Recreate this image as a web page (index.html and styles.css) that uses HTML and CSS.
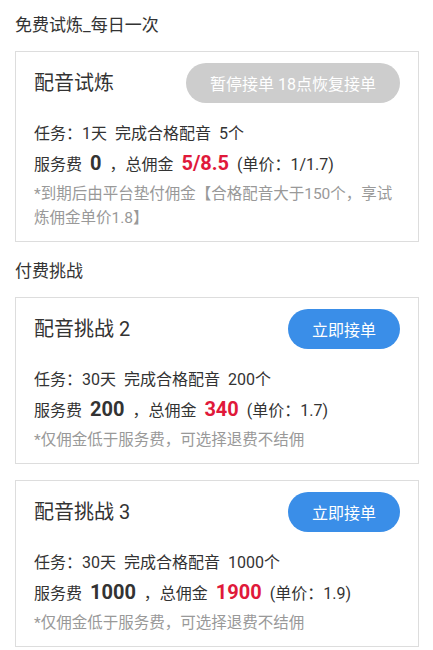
FILE: index.html
```html
<!DOCTYPE html>
<html lang="zh-CN">
<head>
  <meta charset="UTF-8" />
  <meta name="viewport" content="width=device-width, initial-scale=1" />
  <title>配音任务</title>
  <link rel="stylesheet" href="styles.css">
</head>
<body>
  <section class="section">
    <div class="section-title">免费试炼_每日一次</div>
    <div class="card">
      <div class="card-head">
        <div class="card-title">配音试炼</div>
        <button class="btn btn-off">暂停接单 18点恢复接单</button>
      </div>
      <div class="task">任务：1天 完成合格配音 5个</div>
      <div class="fee">服务费 <span class="num">0</span> ，总佣金 <span class="num red">5/8.5</span> (单价：1/1.7)</div>
      <div class="note">*到期后由平台垫付佣金【合格配音大于150个，享试炼佣金单价1.8】</div>
    </div>
  </section>

  <section class="section">
    <div class="section-title">付费挑战</div>
    <div class="card">
      <div class="card-head">
        <div class="card-title">配音挑战 2</div>
        <button class="btn">立即接单</button>
      </div>
      <div class="task">任务：30天 完成合格配音 200个</div>
      <div class="fee">服务费 <span class="num">200</span> ，总佣金 <span class="num red">340</span> (单价：1.7)</div>
      <div class="note">*仅佣金低于服务费，可选择退费不结佣</div>
    </div>

    <div class="card">
      <div class="card-head">
        <div class="card-title">配音挑战 3</div>
        <button class="btn">立即接单</button>
      </div>
      <div class="task">任务：30天 完成合格配音 1000个</div>
      <div class="fee">服务费 <span class="num">1000</span> ，总佣金 <span class="num red">1900</span> (单价：1.9)</div>
      <div class="note">*仅佣金低于服务费，可选择退费不结佣</div>
    </div>
  </section>
</body>
</html>
```

FILE: styles.css
```css
* {
  box-sizing: border-box;
}

body {
  font-family: Roboto, "Noto Sans CJK SC", sans-serif;
  margin: 0;
  padding: 0 14px 0 15px;
  color: #333;
  background: #fff;
}

.section + .section {
  margin-top: 4px;
}

.section-title {
  font-size: 17px;
  line-height: 24px;
  padding: 13px 0 14px;
  color: #333;
}

.card {
  border: 1px solid #ddd;
  padding: 11px 18px 11px;
}

.card + .card {
  margin-top: 16px;
}

.card-head {
  display: flex;
  justify-content: space-between;
  align-items: center;
  height: 40px;
  margin-bottom: 17px;
}

.card-title {
  font-size: 20px;
  line-height: 28px;
}

.btn {
  font-family: inherit;
  font-size: 16px;
  height: 40px;
  padding: 0 24px;
  border: none;
  border-radius: 20px;
  background-color: #3a8ee8;
  color: white;
}

.btn-off {
  background-color: #cdcdcd;
}

.task {
  font-size: 16px;
  line-height: 28px;
  word-spacing: 4px;
}

.fee {
  font-size: 16px;
  line-height: 30px;
  word-spacing: 4px;
}

.num {
  font-size: 20px;
  font-weight: 700;
}

.red {
  color: #e0193a;
}

.note {
  font-size: 15.5px;
  line-height: 24px;
  margin-top: 2px;
  color: #999;
}
```
